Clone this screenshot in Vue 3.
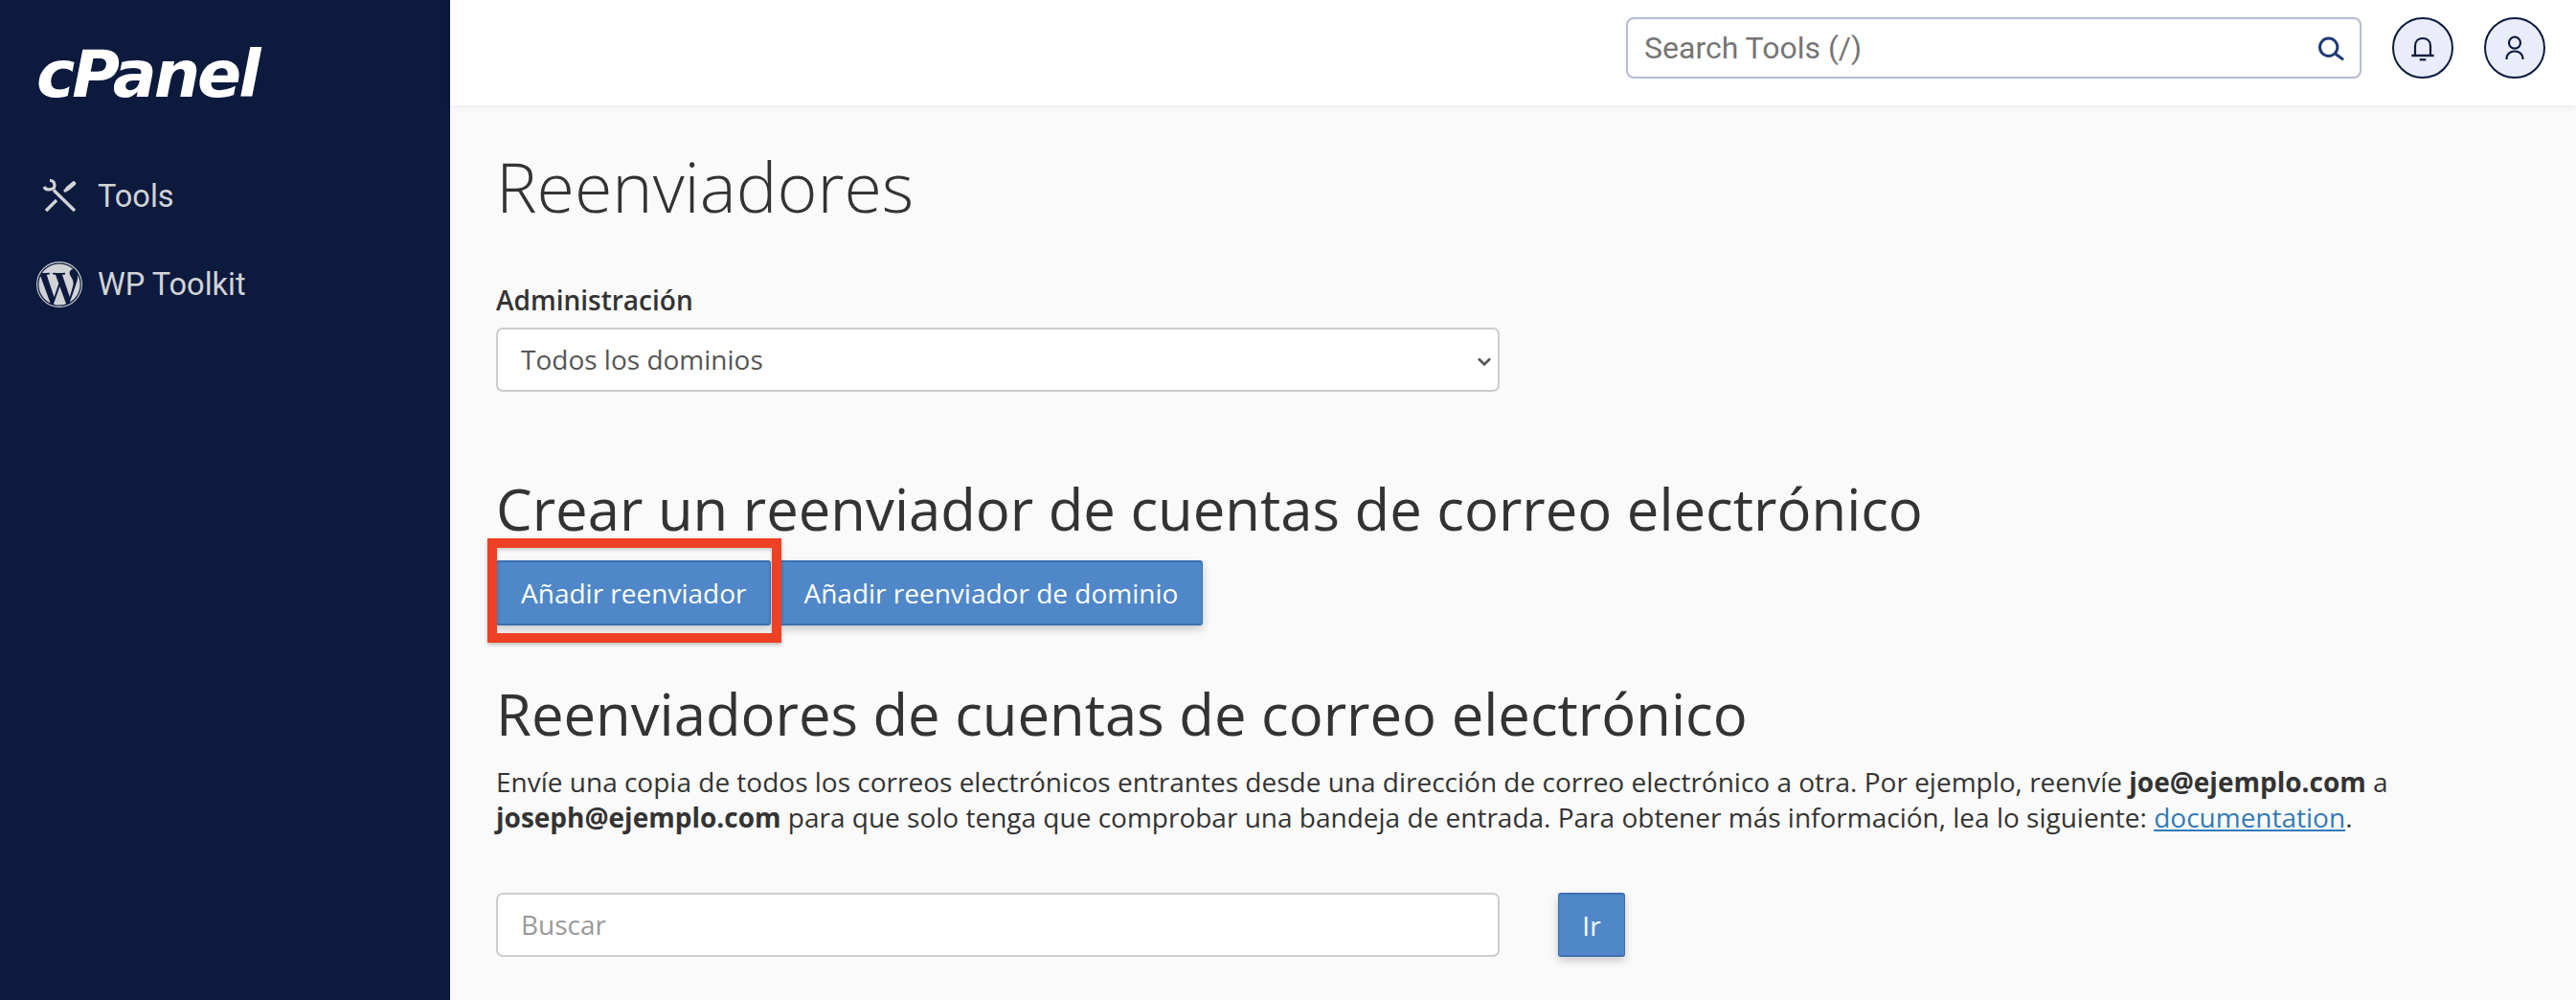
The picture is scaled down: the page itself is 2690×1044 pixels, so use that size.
<script setup>
const navItems = [
  { label: 'Tools', icon: 'tools' },
  { label: 'WP Toolkit', icon: 'wp' }
]
</script>

<template>
  <div class="shell">
    <aside class="sidebar">
      <div class="logo">cPanel</div>
      <nav class="nav">
        <a v-for="item in navItems" :key="item.label" class="nav-item">
          <span class="nav-icon">
            <svg v-if="item.icon === 'tools'" width="40" height="40" viewBox="5 8 40 40" fill="none" stroke="#d2d3d6">
              <path d="M19 21.5 L41 43" stroke-width="3.4" />
              <path d="M15 11.5 C19 11.2 21 15 19.5 19 C15.5 22 10.5 21.5 9 18" stroke-width="3.2" />
              <path d="M30 23 L34 19.5" stroke-width="3" />
              <path d="M33.5 20 L40 14.5" stroke-width="4.6" stroke-linecap="round" />
              <path d="M11 43 L22 32" stroke-width="3.4" />
            </svg>
            <svg v-else width="48" height="48" viewBox="0 0 24 24" fill="#d2d3d6">
              <circle cx="12" cy="12" r="11.7" fill="none" stroke="#d2d3d6" stroke-width="0.55" />
              <path d="M21.469 6.825c.84 1.537 1.318 3.3 1.318 5.175 0 3.979-2.156 7.456-5.363 9.325l3.295-9.527c.615-1.54.82-2.771.82-3.864 0-.405-.026-.78-.07-1.11m-7.981.105c.647-.03 1.232-.105 1.232-.105.582-.075.514-.93-.067-.899 0 0-1.755.135-2.88.135-1.064 0-2.85-.15-2.85-.15-.585-.03-.661.855-.075.885 0 0 .54.061 1.125.09l1.68 4.605-2.37 7.08L5.354 6.9c.649-.03 1.234-.1 1.234-.1.585-.075.516-.93-.065-.896 0 0-1.746.138-2.874.138-.2 0-.438-.008-.69-.015C4.911 3.15 8.235 1.215 12 1.215c2.809 0 5.365 1.072 7.286 2.833-.046-.003-.091-.009-.141-.009-1.06 0-1.812.923-1.812 1.914 0 .89.513 1.643 1.06 2.531.411.72.89 1.643.89 2.977 0 .915-.354 1.994-.821 3.479l-1.075 3.585-3.9-11.61.001.014zM12 22.784c-1.059 0-2.081-.153-3.048-.437l3.237-9.406 3.315 9.087c.024.053.05.101.078.149-1.12.393-2.325.609-3.582.609M1.211 12c0-1.564.336-3.05.935-4.39L7.29 21.709C3.694 19.96 1.212 16.271 1.211 12" />
            </svg>
          </span>
          <span>{{ item.label }}</span>
        </a>
      </nav>
    </aside>

    <div class="column">
      <header class="topbar">
        <div class="tool-search">
          <input class="tool-input" placeholder="Search Tools (/)" />
          <svg class="tool-lens" width="28" height="28" viewBox="0 0 28 28" fill="none" stroke="#1f3a76" stroke-width="3">
            <circle cx="10.7" cy="14.3" r="9.2" />
            <path d="M17.5 21 L25 26.5" stroke-linecap="round" />
          </svg>
        </div>
        <button class="round-btn" aria-label="Notifications">
          <svg width="32" height="32" viewBox="-16 -16 32 32" fill="none" stroke="#0c1a3e" stroke-width="2.2">
            <path d="M-8 7.5 V-2 C-8 -7 -4.5 -10 0 -10 C4.5 -10 8 -7 8 -2 V7.5" />
            <path d="M-11.7 8 H11.7" stroke-width="2.4" />
            <path d="M-3.3 12.3 H3.3" />
          </svg>
        </button>
        <button class="round-btn" aria-label="Account">
          <svg width="32" height="32" viewBox="-16 -16 32 32" fill="none" stroke="#0c1a3e" stroke-width="2.2">
            <circle cx="0" cy="-5.3" r="6" />
            <path d="M-8.5 12 C-8.5 6 -4.5 3.5 0 3.5 C4.5 3.5 8.5 6 8.5 12" />
          </svg>
        </button>
      </header>

      <main class="content">
        <h1 class="title">Reenviadores</h1>

        <label class="field-label">Administración</label>
        <div class="select-wrap">
          <select class="control select">
            <option>Todos los dominios</option>
          </select>
          <svg class="chevron" width="14" height="10" viewBox="0 0 14 10" fill="none" stroke="#555" stroke-width="2.6">
            <path d="M1 1.5 L7 7.5 L13 1.5" />
          </svg>
        </div>

        <h2 class="heading create">Crear un reenviador de cuentas de correo electrónico</h2>
        <div class="actions">
          <button class="btn">Añadir reenviador</button>
          <button class="btn">Añadir reenviador de dominio</button>
          <span class="highlight"></span>
        </div>

        <h2 class="heading list">Reenviadores de cuentas de correo electrónico</h2>
        <p class="intro">
          Envíe una copia de todos los correos electrónicos entrantes desde una dirección de correo electrónico a otra. Por ejemplo, reenvíe <strong>joe@ejemplo.com</strong> a <strong>joseph@ejemplo.com</strong> para que solo tenga que comprobar una bandeja de entrada. Para obtener más información, lea lo siguiente: <a class="doc-link">documentation</a>.
        </p>

        <div class="search-row">
          <input class="control search" placeholder="Buscar" />
          <button class="btn go">Ir</button>
        </div>
      </main>
    </div>
  </div>
</template>

<style>
html, body { margin: 0; background: #fafafa; }
</style>

<style scoped>
.shell {
  display: flex;
  width: 2690px;
  height: 1044px;
  overflow: hidden;
  font-family: "Open Sans", "Liberation Sans", sans-serif;
  color: #333;
  background: #fafafa;
}
.sidebar {
  flex: 0 0 470px;
  background: #0c1a3e;
  padding: 36px 0 0 38px;
  box-sizing: border-box;
}
.logo {
  font-family: "DejaVu Sans", sans-serif;
  font-size: 68px;
  line-height: 84px;
  font-weight: 700;
  font-style: italic;
  letter-spacing: -3px;
  color: #fff;
  width: 240px;
}
.nav {
  display: flex;
  flex-direction: column;
  margin-top: 39px;
}
.nav-item {
  display: flex;
  align-items: center;
  gap: 16px;
  height: 92px;
  font-family: Roboto, sans-serif;
  font-size: 32.5px;
  color: #d2d3d6;
}
.nav-icon {
  width: 48px;
  height: 48px;
  display: flex;
  align-items: center;
  justify-content: center;
}
.column {
  flex: 1;
  display: flex;
  flex-direction: column;
  min-width: 0;
}
.topbar {
  flex: 0 0 110px;
  background: #fff;
  box-shadow: 0 2px 6px rgba(0, 0, 0, 0.06);
  display: flex;
  align-items: center;
  justify-content: flex-end;
  gap: 32px;
  padding: 0 32px 10px 0;
  box-sizing: border-box;
  position: relative;
}
.tool-search {
  position: relative;
  width: 768px;
  height: 64px;
}
.tool-input {
  width: 100%;
  height: 100%;
  box-sizing: border-box;
  border: 2px solid #b4bcd2;
  border-radius: 8px;
  padding: 0 60px 0 17px;
  font-family: Roboto, sans-serif;
  font-size: 32px;
  background: #fff;
  outline: none;
}
.tool-input::placeholder { color: #757575; opacity: 1; }
.tool-lens {
  position: absolute;
  right: 17px;
  top: 17px;
}
.round-btn {
  width: 64px;
  height: 64px;
  border-radius: 50%;
  border: 2px solid #0c1a3e;
  background: #eaedf9;
  padding: 0;
  display: flex;
  align-items: center;
  justify-content: center;
}
.content {
  flex: 1;
  padding: 0 48px;
}
.title {
  margin: 44px 0 0;
  font-size: 71.7px;
  line-height: 80px;
  font-weight: 300;
}
.field-label {
  display: block;
  margin-top: 61px;
  font-size: 28px;
  line-height: 36px;
  font-weight: 600;
}
.control {
  display: block;
  width: 1048px;
  height: 67px;
  box-sizing: border-box;
  border: 2px solid #ccc;
  border-radius: 7px;
  background: #fff;
  font-family: "Open Sans", sans-serif;
  font-size: 28px;
  color: #555;
  padding: 0 24px 2px;
  outline: none;
}
.select-wrap {
  position: relative;
  width: 1048px;
  margin-top: 11px;
}
.select {
  appearance: none;
  -webkit-appearance: none;
}
.chevron {
  position: absolute;
  right: 9px;
  top: 31px;
  pointer-events: none;
}
.search::placeholder { color: #999; opacity: 1; }
.heading {
  margin: 0;
  font-size: 59.8px;
  line-height: 72px;
  font-weight: 400;
}
.create { margin-top: 86px; }
.actions {
  position: relative;
  display: flex;
  gap: 8px;
  margin-top: 18px;
}
.btn {
  height: 68px;
  box-sizing: border-box;
  padding: 0 25px;
  border: 1px solid #3d6fb0;
  border-top-width: 2px;
  border-bottom-width: 2px;
  border-radius: 3px;
  background: #4f87c8;
  color: #fff;
  font-family: "Open Sans", sans-serif;
  font-size: 28px;
  box-shadow: 0 4px 10px rgba(0, 0, 0, 0.2);
}
.highlight {
  position: absolute;
  left: -9px;
  top: -23px;
  width: 287px;
  height: 89px;
  border: 10px solid #ee4024;
  box-shadow: 0 2px 4px rgba(0, 0, 0, 0.25), inset 0 2px 4px rgba(0, 0, 0, 0.2);
  pointer-events: none;
}
.list { margin-top: 56px; }
.intro {
  margin: 17px 0 0;
  font-size: 28px;
  line-height: 37px;
}
.doc-link {
  color: #337ab7;
  text-decoration: underline;
}
.search-row {
  display: flex;
  gap: 61px;
  margin-top: 60px;
}
.go { width: 70px; height: 67px; padding: 0; }
</style>
